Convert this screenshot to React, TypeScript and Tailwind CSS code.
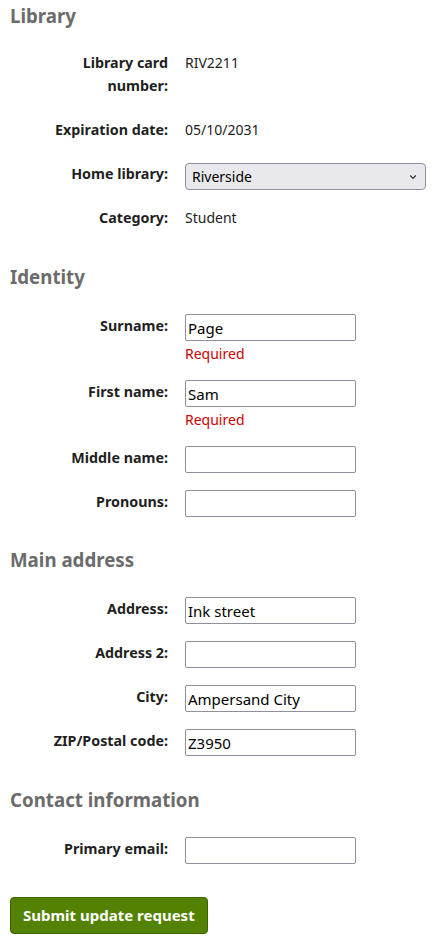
import React from 'react';

type Row = {
    label: string;
    kind: 'text' | 'input' | 'select';
    value?: string;
    required?: boolean;
};

const sections: { title: string; pad: string; rows: Row[] }[] = [
    {
        title: 'Library',
        pad: 'pb-[15px]',
        rows: [
            { label: 'Library card number:', kind: 'text', value: 'RIV2211' },
            { label: 'Expiration date:', kind: 'text', value: '05/10/2031' },
            { label: 'Home library:', kind: 'select', value: 'Riverside' },
            { label: 'Category:', kind: 'text', value: 'Student' },
        ],
    },
    {
        title: 'Identity',
        pad: 'pb-[14px]',
        rows: [
            { label: 'Surname:', kind: 'input', value: 'Page', required: true },
            { label: 'First name:', kind: 'input', value: 'Sam', required: true },
            { label: 'Middle name:', kind: 'input', value: '' },
            { label: 'Pronouns:', kind: 'input', value: '' },
        ],
    },
    {
        title: 'Main address',
        pad: 'pb-[15px]',
        rows: [
            { label: 'Address:', kind: 'input', value: 'Ink street' },
            { label: 'Address 2:', kind: 'input', value: '' },
            { label: 'City:', kind: 'input', value: 'Ampersand City' },
            { label: 'ZIP/Postal code:', kind: 'input', value: 'Z3950' },
        ],
    },
    {
        title: 'Contact information',
        pad: 'pb-[15px]',
        rows: [{ label: 'Primary email:', kind: 'input', value: '' }],
    },
];

const FormRow = ({ row }: { row: Row }) => (
    <div className="flex items-start mb-[21px] min-h-[23px]">
        {/* label column is 158px, text wraps at ~120px */}
        <label className="w-[158px] shrink-0 text-right font-bold text-[14.3px] leading-[23px] text-[#1f1f1f] pl-[34px]">
            {row.label}
        </label>
        <div className="ml-[17px] flex flex-col">
            {row.kind === 'text' && (
                <span className="text-[14px] leading-[23px] text-[#222]">{row.value}</span>
            )}
            {row.kind === 'select' && (
                <div className="relative w-[241px] h-[27px] mt-[1px] -mb-[5px] rounded-[4px] border border-[#8f8f9d] bg-[#e9e9ed] flex items-center pl-[6px] text-[14px] text-black">
                    {row.value}
                    <svg className="absolute right-[8px] top-[10px]" width="8" height="6" viewBox="0 0 8 6">
                        <path d="M1.2 1.5 L4 4.3 L6.8 1.5" fill="none" stroke="#333" strokeWidth="1.2" />
                    </svg>
                </div>
            )}
            {row.kind === 'input' && (
                <input
                    type="text"
                    defaultValue={row.value}
                    className="w-[171px] h-[27px] -mb-[4px] rounded-[2px] border border-[#8f8f9d] bg-white px-[2px] text-[15px] text-black outline-none"
                />
            )}
            {row.required && (
                <span className="text-[14px] leading-[22px] text-[#cc0000] mt-[6px] -mb-[6px]">Required</span>
            )}
        </div>
    </div>
);

export default function App() {
    return (
        <div className="bg-white min-h-screen pl-[10px] pt-[4px] pb-[12px] font-['Noto_Sans','Open_Sans',sans-serif]">
            {sections.map((s, i) => (
                <section key={s.title} className={`flex flex-col ${s.pad}`}>
                    <h2
                        className={`text-[18.7px] leading-[24px] font-bold text-[#6b6b6b] ${i === 0 ? 'mb-[23px]' : 'mb-[25px]'}`}
                    >
                        {s.title}
                    </h2>
                    {s.rows.map((r) => (
                        <FormRow key={r.label} row={r} />
                    ))}
                </section>
            ))}
            <button className="mt-[1px] h-[37px] px-[12px] rounded-[4px] border border-[#3f6300] bg-[#538200] text-white font-bold text-[15px]">
                Submit update request
            </button>
        </div>
    );
}
